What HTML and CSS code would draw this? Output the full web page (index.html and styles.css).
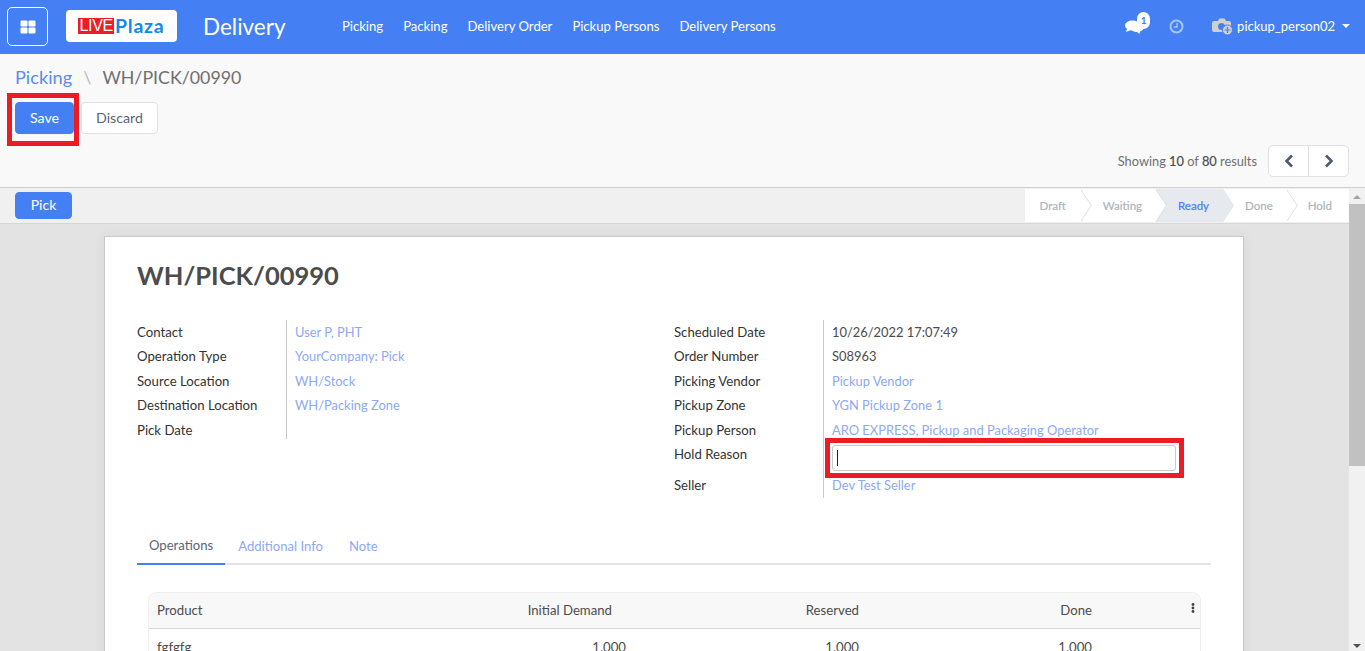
FILE: index.html
```html
<!DOCTYPE html>
<html lang="en">
<head>
<meta charset="utf-8">
<title>Delivery</title>
<link rel="stylesheet" href="styles.css">
</head>
<body>
<header class="navbar">
  <button class="apps" aria-label="Apps">
    <svg width="16" height="14" viewBox="0 0 16 14"><rect x="0.5" y="0.5" width="7" height="6" rx="1" fill="#fff"/><rect x="8.5" y="0.5" width="7" height="6" rx="1" fill="#fff"/><rect x="0.5" y="7.5" width="7" height="6" rx="1" fill="#fff"/><rect x="8.5" y="7.5" width="7" height="6" rx="1" fill="#fff"/></svg>
  </button>
  <div class="logo"><span class="logo-live">LIVE</span><span class="logo-plaza">Plaza</span></div>
  <div class="app-name">Delivery</div>
  <nav class="menu">
    <a>Picking</a><a>Packing</a><a>Delivery Order</a><a>Pickup Persons</a><a>Delivery Persons</a>
  </nav>
  <div class="systray">
    <span class="chat">
      <svg width="20" height="16" viewBox="0 0 20 16"><ellipse cx="7.500" cy="6.500" rx="7.500" ry="5" fill="#fff"/><path d="M2 9.500 1 13l5-2z" fill="#fff"/><ellipse cx="12" cy="9" rx="6.500" ry="4" fill="#fff"/><path d="M11 12l3.500 3 .5-3z" fill="#fff"/></svg>
      <span class="badge">1</span>
    </span>
    <svg class="clock" width="15" height="15" viewBox="0 0 15 15"><circle cx="7.500" cy="7.500" r="6" fill="none" stroke="#a9c4f9" stroke-width="2"/><path d="M8 3.800v4.200H4.800" fill="none" stroke="#a9c4f9" stroke-width="1.400"/></svg>
    <span class="user">
      <svg width="22" height="19" viewBox="0 0 22 19"><path d="M2 4h4l1.500-2.500h5L14 4h3a2 2 0 0 1 2 2v9H2a2 2 0 0 1-2-2V6a2 2 0 0 1 2-2z" fill="#d0d0d0"/><circle cx="9.500" cy="9.500" r="3.500" fill="#4480f3"/><circle cx="15.500" cy="13" r="5" fill="#d0d0d0" stroke="#4480f3" stroke-width="1"/><path d="M15.500 10v6M12.500 13h6" stroke="#4480f3" stroke-width="1.200"/></svg>
      <span class="user-name">pickup_person02</span><i class="caret"></i>
    </span>
  </div>
</header>

<section class="control">
  <div class="breadcrumb"><a>Picking</a><span class="sep">\</span><span class="crumb">WH/PICK/00990</span></div>
  <div class="buttons">
    <span class="save-wrap"><button class="btn btn-primary btn-save">Save</button><i class="hl hl-save"></i></span>
    <button class="btn btn-light">Discard</button>
  </div>
  <div class="pager">
    <span class="pager-text">Showing <b>10</b> of <b>80</b> results</span>
    <div class="pager-btns">
      <button aria-label="Previous"><svg width="10" height="14" viewBox="0 0 10 14"><path d="M8 1.500 2.500 7 8 12.500" fill="none" stroke="#4c5a73" stroke-width="2.600"/></svg></button>
      <button aria-label="Next"><svg width="10" height="14" viewBox="0 0 10 14"><path d="M2 1.500 7.500 7 2 12.500" fill="none" stroke="#4c5a73" stroke-width="2.600"/></svg></button>
    </div>
  </div>
</section>

<div class="workspace">
  <main class="main">
    <div class="statusbar">
      <button class="btn btn-primary btn-pick">Pick</button>
      <div class="steps">
        <span class="step first">Draft</span>
        <span class="step">Waiting</span>
        <span class="step active">Ready</span>
        <span class="step">Done</span>
        <span class="step last">Hold</span>
      </div>
    </div>
    <div class="content">
      <article class="sheet">
        <h1 class="title">WH/PICK/00990</h1>
        <div class="groups">
          <div class="group">
            <span class="lbl">Contact</span><a class="val">User P, PHT</a>
            <span class="lbl">Operation Type</span><a class="val">YourCompany: Pick</a>
            <span class="lbl">Source Location</span><a class="val">WH/Stock</a>
            <span class="lbl">Destination Location</span><a class="val">WH/Packing Zone</a>
            <span class="lbl">Pick Date</span><span class="val val-end"></span>
          </div>
          <div class="group group-right">
            <span class="lbl">Scheduled Date</span><span class="val plain">10/26/2022 17:07:49</span>
            <span class="lbl">Order Number</span><span class="val plain">S08963</span>
            <span class="lbl">Picking Vendor</span><a class="val">Pickup Vendor</a>
            <span class="lbl">Pickup Zone</span><a class="val">YGN Pickup Zone 1</a>
            <span class="lbl">Pickup Person</span><a class="val">ARO EXPRESS, Pickup and Packaging Operator</a>
            <span class="lbl">Hold Reason</span>
            <span class="val"><span class="input"><i class="cursor"></i><i class="hl hl-input"></i></span></span>
            <span class="lbl">Seller</span><a class="val">Dev Test Seller</a>
          </div>
        </div>
        <div class="tabs">
          <span class="tab active">Operations</span><span class="tab">Additional Info</span><span class="tab">Note</span>
        </div>
        <div class="table">
          <div class="row head">
            <span class="c-product">Product</span><span class="c-demand">Initial Demand</span><span class="c-reserved">Reserved</span><span class="c-done">Done</span>
            <svg class="kebab" width="4" height="10" viewBox="0 0 4 10"><circle cx="2" cy="1.500" r="1.400" fill="#444"/><circle cx="2" cy="5" r="1.400" fill="#444"/><circle cx="2" cy="8.500" r="1.400" fill="#444"/></svg>
          </div>
          <div class="row body">
            <span class="c-product">fgfgfg</span><span class="c-demand">1.000</span><span class="c-reserved">1.000</span><span class="c-done">1.000</span>
          </div>
        </div>
      </article>
    </div>
  </main>
  <div class="scrollbar">
    <i class="arrow up"></i>
    <div class="track"><div class="thumb"></div></div>
    <i class="arrow down"></i>
  </div>
</div>
</body>
</html>
```
FILE: styles.css
```css
* { box-sizing: border-box; }
html, body { margin: 0; height: 100%; overflow: hidden; }
body { display: flex; flex-direction: column; height: 651px; font-family: Lato, "Liberation Sans", sans-serif; font-size: 13px; color: #4c4c4c; background: #f9f9f9; }
a { color: #4a7ff0; }
button { font-family: inherit; }

.navbar { flex: 0 0 54px; display: flex; align-items: center; background: #4480f3; color: #fff; padding: 0 0 2px 7px; }
.apps { width: 41px; height: 39px; margin-top: 1px; display: flex; align-items: center; justify-content: center; background: transparent; border: 1px solid #fff; border-radius: 5px; padding: 0; }
.logo { width: 111px; height: 32px; margin-left: 18px; background: #fff; border-radius: 4px; display: flex; align-items: center; justify-content: center; font-weight: 700; }
.logo-live { background: #ee1c25; color: #fff; font-family: "Liberation Sans", sans-serif; font-weight: 400; font-size: 16px; line-height: 16px; padding: 0 1px; letter-spacing: -.3px; }
.logo-plaza { color: #0f8be8; font-size: 19.500px; line-height: 20px; margin-left: 1px; letter-spacing: .8px; }
.app-name { font-size: 22.500px; margin-left: 26px; width: 139px; }
.menu { display: flex; gap: 20px; font-size: 13.100px; }
.menu a { color: #fff; }
.systray { margin-left: auto; display: flex; align-items: center; padding-right: 15px; }
.chat { position: relative; width: 24px; height: 20px; display: block; }
.chat svg { position: absolute; left: 0; top: 3px; }
.badge { position: absolute; left: 12px; top: -4px; width: 13px; height: 17px; border-radius: 7px; background: #fff; color: #4480f3; font-size: 10px; font-weight: 700; text-align: center; line-height: 17px; }
.clock { margin-left: 20px; }
.user { display: flex; align-items: center; margin-left: 28px; }
.user-name { margin-left: 3px; font-size: 13px; }
.caret { width: 0; height: 0; margin-left: 7px; border: 4px solid transparent; border-top-color: #fff; border-bottom: 0; }

.control { flex: 0 0 134px; background: #f9f9f9; border-bottom: 1px solid #d0d0d0; padding: 11px 16px 0 15px; }
.breadcrumb { font-size: 18.200px; line-height: 24px; }
.sep { color: #b9b9b9; margin: 0 11px; }
.crumb { color: #6f6f6f; font-size: 17.800px; }
.breadcrumb a { color: #5b89ef; }
.buttons { display: flex; align-items: center; margin-top: 13px; }
.save-wrap { position: relative; display: block; }
.btn { height: 32px; font-size: 14.200px; border-radius: 4px; cursor: default; }
.btn-primary { background: #4480f3; border: 1px solid #4480f3; color: #fff; padding: 0 0 1px; }
.btn-save { display: block; width: 59px; }
.btn-light { background: #fff; border: 1px solid #e1e1e1; color: #5a6675; width: 77px; margin-left: 7px; padding: 0 0 1px; }
.hl { position: absolute; display: block; border: 5px solid #ed1c24; pointer-events: none; }
.hl-save { left: -8px; top: -9px; width: 72px; height: 53px; }
.pager { display: flex; align-items: center; justify-content: flex-end; margin-top: 11px; }
.pager-text { font-size: 12.800px; color: #6f6f6f; margin-right: 11px; }
.pager-text b { font-weight: 400; color: #4c4c4c; -webkit-text-stroke: .2px #4c4c4c; }
.pager-btns { display: flex; background: #fff; border: 1px solid #e1e1e1; border-radius: 5px; height: 32px; width: 81px; }
.pager-btns button { flex: 1; background: transparent; border: 0; padding: 0; display: flex; align-items: center; justify-content: center; }
.pager-btns button + button { border-left: 1px solid #e1e1e1; }

.workspace { flex: 1; min-height: 0; display: flex; }
.main { flex: 1; min-width: 0; display: flex; flex-direction: column; }
.statusbar { flex: 0 0 36px; display: flex; align-items: center; justify-content: space-between; padding-left: 15px; background: #f0f0f0; border-bottom: 1px solid #d6d6d6; }
.btn-pick { width: 57px; height: 27px; font-size: 14px; padding-bottom: 2px; }
.steps { display: flex; height: 33px; align-self: flex-start; background: #fff; margin-top: 1px; }
.step { position: relative; display: flex; align-items: center; height: 33px; padding: 0 14px 1px 22px; color: #aeb4bd; font-size: 11.500px; -webkit-text-stroke: .2px #aeb4bd; white-space: nowrap; }
.step.first { padding: 0 15px 1px; }
.step.last { padding: 0 17px 1px 21px; }
.step::before, .step::after { content: ""; position: absolute; z-index: 1; top: 0; width: 11px; height: 33px; clip-path: polygon(0 0, 100% 50%, 0 100%); }
.step::before { left: 100%; background: #dcdfe3; }
.step::after { left: calc(100% - 1px); background: #fff; }
.step.last::before, .step.last::after { display: none; }
.step.active { background: #e6e9ed; color: #4480f3; -webkit-text-stroke: .2px #4480f3; }
.step.active::before { background: #e6e9ed; }
.step.active::after { background: #e6e9ed; left: 100%; }

.content { flex: 1; min-height: 0; overflow: hidden; background: #e3e3e3; padding-top: 12px; }
.sheet { width: 1140px; margin-left: 104px; height: 500px; background: #fff; border: 1px solid #c9c9c9; border-bottom: 0; padding: 22px 32px 0 32px; box-shadow: 0 0 12px rgba(0,0,0,.05); }
.title { margin: 0; font-size: 25.500px; line-height: 32px; font-weight: 700; color: #4c4c4c; }
.groups { display: grid; grid-template-columns: 537px 1fr; margin-top: 28.500px; }
.group { display: grid; grid-template-columns: 149px 1fr; grid-auto-rows: 24.500px; align-content: start; }
.group-right { grid-template-rows: repeat(5, 24.500px) 31px 24.500px; }
.lbl { color: #333; font-size: 13.200px; line-height: 24.500px; white-space: nowrap; }
.val { color: #8da9f4; font-size: 12.900px; border-left: 1px solid #c9c9c9; padding-left: 8px; line-height: 24.500px; white-space: nowrap; }
.val.plain { color: #4c4c4c; }
.val-end { height: 21px; }
.input { position: relative; display: block; width: 344px; height: 26px; margin-top: 3px; border: 1px solid #c9c9c9; border-radius: 3px; background: #fff; padding: 4px; }
.cursor { display: block; width: 1px; height: 16px; background: #222; }
.hl-input { left: -8px; top: -8px; width: 359px; height: 40px; }

.tabs { display: flex; margin-top: 31px; border-bottom: 2px solid #e1e4e9; height: 36px; font-size: 13.100px; }
.tab { color: #8da9f4; padding: 0 13px; line-height: 34px; height: 36px; }
.tab.active { color: #5a6675; border-bottom: 2px solid #4480f3; line-height: 32px; padding: 0 12px; }
.table { margin: 27px 10px 0 11px; border: 1px solid #efefef; border-radius: 8px 8px 0 0; font-size: 13.200px; }
.row { position: relative; display: grid; grid-template-columns: 310px 145px 247px 233px 1fr; padding-left: 8px; align-items: center; }
.head { height: 36px; background: #f8f8f8; border-bottom: 1px solid #d4d6da; border-radius: 8px 8px 0 0; color: #4c4c4c; }
.body { height: 36px; }
.c-demand, .c-reserved, .c-done { text-align: right; }
.body .c-demand { margin-right: -14px; }
.kebab { position: absolute; right: 5px; top: 10px; }

.scrollbar { flex: 0 0 16px; display: flex; flex-direction: column; align-items: center; background: #f1f1f1; }
.track { flex: 1; width: 100%; padding-top: 5px; }
.thumb { height: 262px; background: #c1c1c1; }
.arrow { width: 0; height: 0; border: 4px solid transparent; }
.arrow.up { border-bottom-color: #a3a3a3; border-top: 0; margin-top: 7px; }
.arrow.down { border-top-color: #505050; border-bottom: 0; margin-bottom: 3px; }
```
